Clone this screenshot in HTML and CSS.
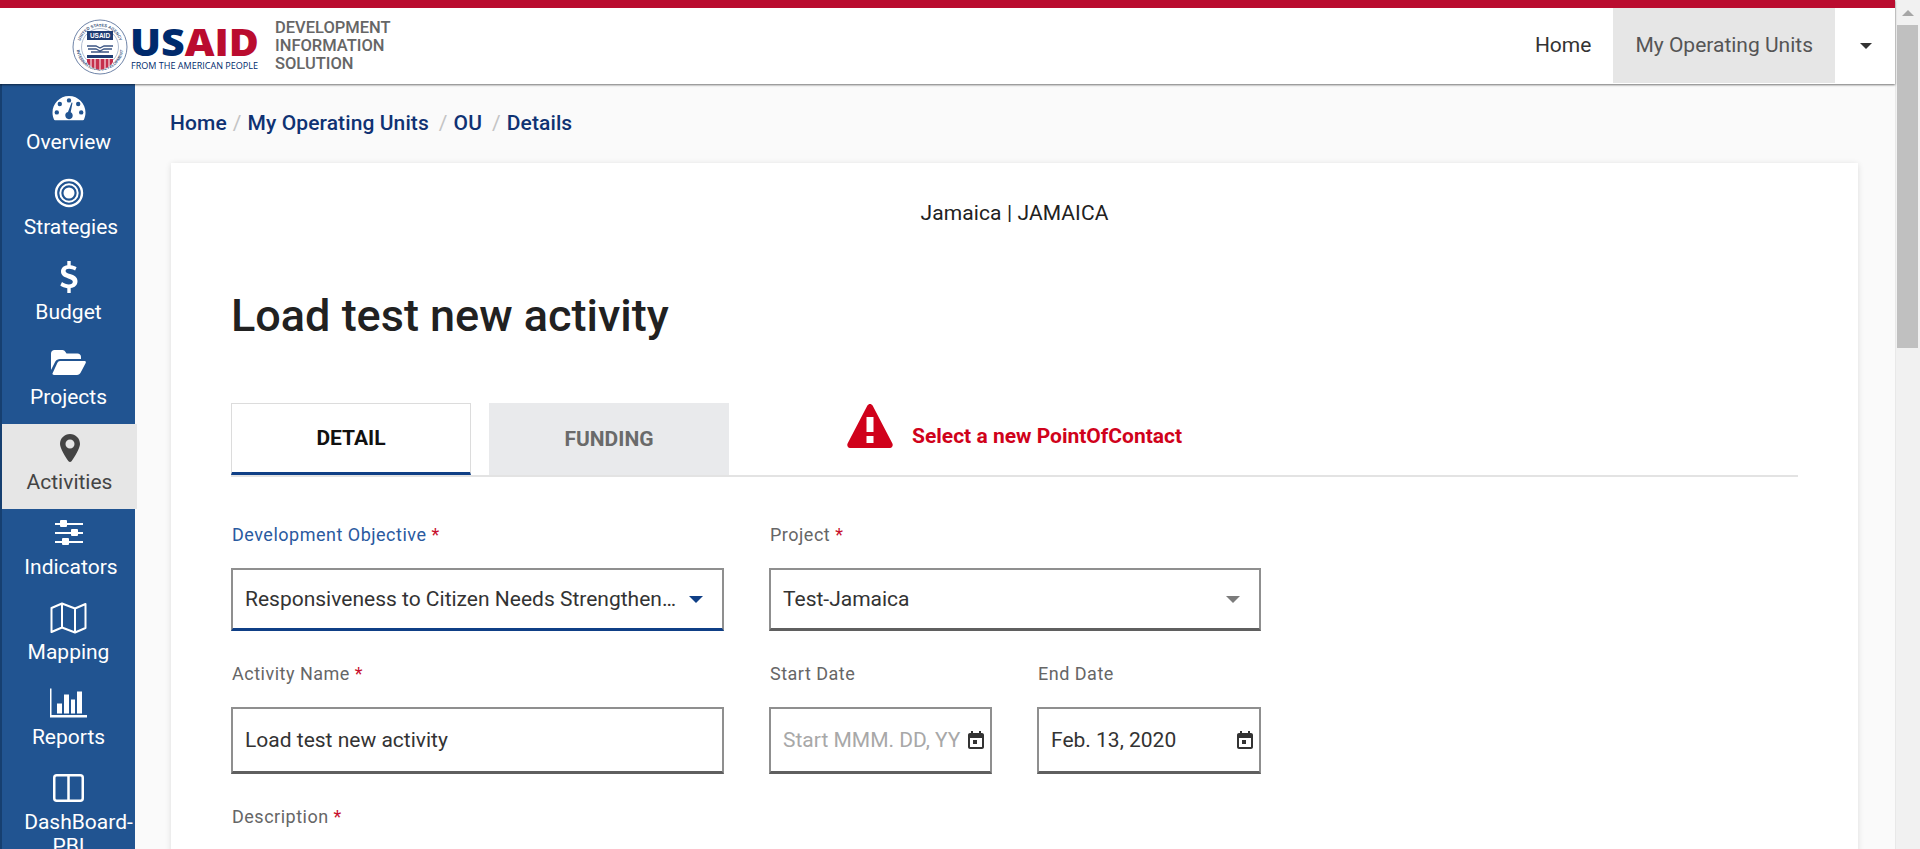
FILE: index.html
```html
<!doctype html>
<html>
<head>
    <title>Load test new activity</title>
    <meta charset="utf-8"/>
    <link rel="stylesheet" href="styles.css">
</head>
<body>
<div class="window">
    <div class="viewport">
        <header class="topbar">
            <div class="brand">
                <svg class="logo" width="190" height="58" viewBox="0 0 190 58">
                    <defs>
                        <path id="sealTop" d="M7.500 28 A20.500 20.500 0 0 1 48.500 28"/>
                        <path id="sealBottom" d="M4.500 28 A23.500 23.500 0 0 0 51.500 28"/>
                    </defs>
                    <circle cx="28" cy="28" r="27" fill="#fff" stroke="#6f84a8" stroke-width="1"/>
                    <circle cx="28" cy="28" r="18.500" fill="none" stroke="#8fa0bd" stroke-width=".7"/>
                    <text class="seal-text"><textPath href="#sealTop" startOffset="50%" text-anchor="middle">UNITED STATES AGENCY</textPath></text>
                    <text class="seal-text"><textPath href="#sealBottom" startOffset="50%" text-anchor="middle">INTERNATIONAL DEVELOPMENT</textPath></text>
                    <rect x="15" y="12" width="26" height="9" fill="#1f3d73"/>
                    <text class="seal-name" x="28" y="19" text-anchor="middle">USAID</text>
                    <path d="M15 27 h9 l4 2 l4 -2 h9 M16 30 h8 l4 2 l4 -2 h8 M19 33 h18" fill="none" stroke="#3c5684" stroke-width="1.300"/>
                    <rect x="15" y="36" width="26" height="3" fill="#1f3d73"/>
                    <path d="M15 40 h26 v3 q-2 5 -13 8 q-11 -3 -13 -8 z" fill="#c5304c"/>
                    <path d="M19 40 v8 M23 40 v10 M28 40 v11 M33 40 v10 M37 40 v8" stroke="#fff" stroke-width="1"/>
                    <text class="logo-name" x="58" y="37" textLength="129" lengthAdjust="spacingAndGlyphs"><tspan class="logo-us">US</tspan><tspan class="logo-aid">AID</tspan></text>
                    <text class="logo-from" x="59" y="50" textLength="127" lengthAdjust="spacingAndGlyphs">FROM THE AMERICAN PEOPLE</text>
                </svg>
                <div class="brand-title">DEVELOPMENT<br>INFORMATION<br>SOLUTION</div>
            </div>
            <nav class="topnav">
                <a class="topnav-link">Home</a>
                <a class="topnav-link topnav-active">My Operating Units</a>
                <span class="topnav-caret"></span>
            </nav>
        </header>

        <div class="content-wrap">
            <aside class="sidebar">
                <a class="side-item">
                    <svg class="side-icon" width="34" height="26" viewBox="0 0 34 26"><path fill="#fff" fill-rule="evenodd" d="M17 1C7.600 1 .5 8.600 .5 17.600c0 2.600.6 5 1.600 7.100.2.3.5.5.9.5h28c.4 0 .7-.2.9-.5 1-2.100 1.600-4.500 1.600-7.100C33.500 8.600 26.400 1 17 1zM17 3.200a2.200 2.200 0 1 1 0 4.400 2.200 2.200 0 0 1 0-4.400zM7.800 6.800a2.200 2.200 0 1 1 0 4.400 2.200 2.200 0 0 1 0-4.400zM26.200 6.800a2.200 2.200 0 1 1 0 4.400 2.200 2.200 0 0 1 0-4.400zM4.800 15.200a2.200 2.200 0 1 1 0 4.400 2.200 2.200 0 0 1 0-4.400zM29.200 15.200a2.200 2.200 0 1 1 0 4.400 2.200 2.200 0 0 1 0-4.400zM19.600 7.500l.9.2-1.800 9.600c1.200.6 2 1.800 2 3.200a3.700 3.700 0 1 1-4.700-3.600z"/></svg>
                    <span>Overview</span>
                </a>
                <a class="side-item side-item-nudge">
                    <svg class="side-icon" width="30" height="30" viewBox="0 0 30 30"><g fill="none" stroke="#fff"><circle cx="15" cy="15" r="13" stroke-width="2.400"/><circle cx="15" cy="15" r="8.700" stroke-width="2"/></g><circle cx="15" cy="15" r="5.500" fill="#fff"/></svg>
                    <span>Strategies</span>
                </a>
                <a class="side-item">
                    <svg class="side-icon" width="18" height="34" viewBox="0 0 18 34"><path fill="#fff" d="M7.300 0h3.400v4.200c2.300.3 4.300 1 5.900 2l-1.500 3.400c-2-1.200-4-1.900-6-1.900-2.200 0-3.500.9-3.500 2.200 0 1.500 1.500 2.100 4.400 3.100 4.300 1.400 7.500 3 7.500 7.200 0 3.700-2.600 6.300-6.800 6.900V32H7.300v-4.800c-2.700-.3-5.200-1.300-7-2.700L2 21c2.100 1.500 4.500 2.400 6.800 2.400 2.500 0 4-1 4-2.700 0-1.600-1.500-2.300-4.600-3.300C4.200 16 1 14.500 1 10.500 1 7 3.500 4.800 7.300 4.200z"/></svg>
                    <span>Budget</span>
                </a>
                <a class="side-item">
                    <svg class="side-icon" width="35" height="26" viewBox="0 0 35 26"><path fill="#fff" d="M0 3.500C0 1.500 1.500 0 3.500 0h8c1.300 0 2.300.8 3 2l1 1.500h11c2 0 3.500 1.500 3.500 3.500v2H9c-2 0-3.700 1-4.800 2.700L0 20z"/><path fill="#fff" d="M9 11h24.500c1.100 0 1.700 1 1.200 2l-5 9.500c-.8 1.500-2 2.500-3.700 2.500H3c-1.300 0-2-.9-1.300-2L6.300 13C6.900 11.800 7.800 11 9 11z"/></svg>
                    <span>Projects</span>
                </a>
                <a class="side-item side-active">
                    <svg class="side-icon" width="20" height="28" viewBox="0 0 20 28"><path fill="#444" fill-rule="evenodd" d="M10 0C4.400 0 0 4.400 0 10c0 4.300 6 13.800 8.500 17.200.8 1 2.200 1 3 0C14 23.800 20 14.300 20 10 20 4.400 15.600 0 10 0zM10 5.500a4.500 4.500 0 1 1 0 9 4.500 4.500 0 0 1 0-9z"/></svg>
                    <span>Activities</span>
                </a>
                <a class="side-item side-item-nudge">
                    <svg class="side-icon" width="30" height="26" viewBox="0 0 30 26"><g fill="#fff"><rect x="1" y="3" width="28" height="2"/><rect x="1" y="12" width="28" height="2"/><rect x="1" y="21" width="28" height="2"/><rect x="6" y="0" width="7" height="7" rx="1"/><rect x="17" y="9" width="7" height="7" rx="1"/><rect x="8" y="18" width="7" height="7" rx="1"/></g></svg>
                    <span>Indicators</span>
                </a>
                <a class="side-item">
                    <svg class="side-icon" width="37" height="33" viewBox="0 0 37 33"><path fill="none" stroke="#fff" stroke-width="2" stroke-linejoin="round" d="M1.500 6.500 12 2l13 5 10.500-4.500v24L25 31l-13-5-10.500 4.500zM12 2v24M25 7v24"/></svg>
                    <span>Mapping</span>
                </a>
                <a class="side-item">
                    <svg class="side-icon" width="37" height="29" viewBox="0 0 37 29"><path fill="#fff" d="M0 0h1.500v26.500H37V29H0z"/><path fill="#fff" d="M7 15h5v10H7zM14 6h5v19h-5zM21 11h4v14h-4zM27 3h5v22h-5z"/></svg>
                    <span>Reports</span>
                </a>
                <a class="side-item side-item-wrap">
                    <svg class="side-icon" width="31" height="28" viewBox="0 0 31 28"><rect x="1.250" y="1.250" width="28.500" height="25.500" rx="2.500" fill="none" stroke="#fff" stroke-width="2.500"/><rect x="14.250" y="2" width="2.500" height="24" fill="#fff"/></svg>
                    <span>DashBoard-<br>PBI</span>
                </a>
            </aside>

            <main class="main">
                <div class="breadcrumb">
                    <a>Home</a><span class="crumb-sep">/</span><a>My Operating Units</a><span class="crumb-sep crumb-sep-wide">/</span><a>OU</a><span class="crumb-sep crumb-sep-wide">/</span><a>Details</a>
                </div>

                <section class="card">
                    <div class="ou-name">Jamaica | JAMAICA</div>
                    <h1 class="activity-title">Load test new activity</h1>

                    <div class="tabs">
                        <a class="tab tab-active">DETAIL</a>
                        <a class="tab tab-off">FUNDING</a>
                        <div class="tab-warning">
                            <svg width="46" height="44" viewBox="0 0 46 44"><path fill="#d0021b" fill-rule="evenodd" d="M23 0c1 0 2 .6 2.600 1.600l19.800 38c.9 1.800-.2 4.400-2.400 4.400H3c-2.200 0-3.300-2.600-2.400-4.400l19.800-38C21 .6 22 0 23 0zM19.500 13v15h7V13zM19.500 32v7h7v-7z"/></svg>
                            <span>Select a new PointOfContact</span>
                        </div>
                    </div>

                    <div class="form-grid">
                        <div class="field">
                            <label class="field-label label-focus">Development Objective <em>*</em></label>
                            <div class="input input-focus">
                                <span class="input-value">Responsiveness to Citizen Needs Strengthened</span>
                                <span class="arrow arrow-blue"></span>
                            </div>
                        </div>
                        <div class="field field-wide">
                            <label class="field-label">Project <em>*</em></label>
                            <div class="input">
                                <span class="input-value">Test-Jamaica</span>
                                <span class="arrow"></span>
                            </div>
                        </div>

                        <div class="field">
                            <label class="field-label">Activity Name <em>*</em></label>
                            <div class="input input-tall">
                                <span class="input-value">Load test new activity</span>
                            </div>
                        </div>
                        <div class="field">
                            <label class="field-label">Start Date</label>
                            <div class="input input-tall input-date">
                                <span class="input-value placeholder">Start MMM. DD, YY</span>
                                <svg class="cal" width="16" height="18" viewBox="0 0 16 18"><path fill="#333" fill-rule="evenodd" d="M3 0h2v2h6V0h2v2h1c1.100 0 2 .9 2 2v12c0 1.100-.9 2-2 2H2c-1.100 0-2-.9-2-2V4c0-1.100.9-2 2-2h1zM2 7v9h12V7zM5 9h4v4H5z"/></svg>
                            </div>
                        </div>
                        <div class="field">
                            <label class="field-label">End Date</label>
                            <div class="input input-tall input-date">
                                <span class="input-value">Feb. 13, 2020</span>
                                <svg class="cal" width="16" height="18" viewBox="0 0 16 18"><path fill="#333" fill-rule="evenodd" d="M3 0h2v2h6V0h2v2h1c1.100 0 2 .9 2 2v12c0 1.100-.9 2-2 2H2c-1.100 0-2-.9-2-2V4c0-1.100.9-2 2-2h1zM2 7v9h12V7zM5 9h4v4H5z"/></svg>
                            </div>
                        </div>

                        <div class="field field-full">
                            <label class="field-label">Description <em>*</em></label>
                        </div>
                    </div>
                </section>
            </main>
        </div>
    </div>

    <div class="scrollbar">
        <span class="scroll-up"></span>
        <div class="scroll-thumb"></div>
    </div>
</div>
</body>
</html>
```

FILE: styles.css
```css
* {
box-sizing: border-box;
}
html, body {
margin: 0;
padding: 0;
height: 849px;
overflow: hidden;
}
body {
font-family: Roboto, "Helvetica Neue", Arial, sans-serif;
color: #212121;
background-color: #fafafa;
}
.window {
display: flex;
height: 849px;
}
.viewport {
flex: 1;
min-width: 0;
display: flex;
flex-direction: column;
}

/* top bar */
.topbar {
flex: none;
height: 84px;
display: flex;
justify-content: space-between;
background-color: #fff;
border-top: 8px solid #ba0c2f;
box-shadow: 0 1px 2px rgba(0,0,0,.55);
position: relative;
z-index: 2;
}
.brand {
display: flex;
align-items: center;
padding-left: 72px;
}
.logo {
flex: none;
margin-top: 3px;
}
.seal-text {
font-family: "Liberation Sans", Arial, sans-serif;
font-size: 4.200px;
font-weight: 700;
fill: #3d5680;
}
.seal-name {
font-family: "Liberation Sans", Arial, sans-serif;
font-size: 6.500px;
font-weight: 700;
fill: #fff;
}
.logo-name {
font-family: "Open Sans", Arial, sans-serif;
font-size: 37px;
font-weight: 800;
}
.logo-us {
fill: #002a6c;
}
.logo-aid {
fill: #ba0c2f;
}
.logo-from {
font-family: "Open Sans", Arial, sans-serif;
font-size: 9px;
font-weight: 400;
fill: #002a6c;
}
.brand-title {
margin-left: 13px;
font-size: 16.500px;
line-height: 18px;
font-weight: 500;
color: #666;
}
.topnav {
display: flex;
align-items: stretch;
}
.topnav-link {
display: flex;
align-items: center;
padding: 0 22px 1px 22px;
font-size: 21px;
color: #333;
height: 75px;
}
.topnav-active {
background-color: #e6e6e6;
color: #555;
}
.topnav-caret {
width: 60px;
position: relative;
}
.topnav-caret:after {
content: "";
position: absolute;
left: 25px;
top: 35px;
border: 6px solid transparent;
border-top: 6px solid #333;
border-bottom: 0;
}

/* side navigation */
.content-wrap {
flex: 1;
min-height: 0;
display: flex;
overflow: hidden;
}
.sidebar {
flex: none;
width: 135px;
background-color: #215491;
border-left: 2px solid #163f70;
}
.side-item {
display: flex;
flex-direction: column;
align-items: center;
height: 85px;
padding-top: 7px;
font-size: 21px;
line-height: 24px;
color: #fff;
text-align: center;
}
.side-icon {
height: 34px;
flex: none;
margin-bottom: 5px;
}
.side-active {
margin-right: -2px;
background-color: #e6e6e6;
color: #444;
}
.side-item-nudge span {
text-indent: 5px;
}
.side-item-wrap span {
text-indent: 20px;
}

/* content */
.main {
flex: 1;
min-width: 0;
padding: 0 37px 0 36px;
}
.breadcrumb {
height: 77px;
margin: 0 0 2px -1px;
display: flex;
align-items: center;
font-size: 21px;
font-weight: 500;
letter-spacing: .1px;
color: #0f3273;
}
.crumb-sep {
font-weight: 400;
color: #c4c4c4;
margin: 0 6px;
}
.crumb-sep-wide {
margin-left: 10px;
}
.card {
height: 700px;
padding: 34px 60px 0 60px;
background-color: #fff;
box-shadow: 0 1px 6px rgba(0,0,0,.12);
}
.ou-name {
text-align: center;
font-size: 21px;
letter-spacing: .1px;
line-height: 32px;
color: #212121;
}
.activity-title {
margin: 57px 0 0 0;
font-size: 45px;
line-height: 60px;
font-weight: 500;
color: #212121;
}

/* tabs */
.tabs {
margin-top: 57px;
height: 74px;
display: flex;
border-bottom: 2px solid #e3e3e3;
}
.tab {
width: 240px;
height: 72px;
display: flex;
align-items: center;
justify-content: center;
font-size: 21px;
font-weight: 700;
}
.tab-active {
border: 1px solid #dcdcdc;
border-bottom: 3px solid #0f3f86;
color: #111;
}
.tab-off {
margin-left: 18px;
background-color: #e9eaec;
color: #6a6a6a;
}
.tab-warning {
margin-left: 118px;
display: flex;
align-items: flex-start;
padding-top: 1px;
height: 72px;
color: #d0021b;
font-size: 21px;
line-height: 24px;
font-weight: 700;
gap: 19px;
}
.tab-warning span {
margin-top: 20px;
}

/* form */
.form-grid {
display: grid;
grid-template-columns: 493px 223px 224px;
column-gap: 45px;
margin-top: 45px;
}
.field {
min-width: 0;
margin-bottom: 30px;
}
.field-wide {
grid-column: span 2;
}
.field-full {
grid-column: 1 / -1;
}
.field-label {
display: block;
padding-left: 1px;
height: 26px;
font-size: 18px;
line-height: 26px;
color: #666;
letter-spacing: .5px;
}
.field-label em {
font-style: normal;
color: #c8102e;
}
.label-focus {
color: #2a5a9f;
}
.input {
margin-top: 20px;
height: 63px;
display: flex;
align-items: center;
padding: 0 14px 0 12px;
border: 2px solid #8f8f8f;
border-bottom: 3px solid #5f5f5f;
font-size: 21px;
color: #333;
}
.input-tall {
height: 67px;
}
.input-focus {
border-bottom-color: #0f3f86;
}
.input-value {
flex: 1;
min-width: 0;
white-space: nowrap;
overflow: hidden;
text-overflow: ellipsis;
}
.placeholder {
color: #a8a8a8;
text-overflow: clip;
}
.input-date {
padding-right: 6px;
}
.cal {
flex: none;
margin-left: 6px;
}
.arrow {
flex: none;
margin-left: 10px;
margin-right: 5px;
border: 7px solid transparent;
border-top: 7px solid #7b7b7b;
border-bottom: 0;
}
.arrow-blue {
border-top-color: #0f3f86;
}

/* scrollbar */
.scrollbar {
flex: none;
width: 25px;
background-color: #f1f1f1;
border-left: 1px solid #e8e8e8;
position: relative;
}
.scroll-up {
position: absolute;
left: 6px;
top: 10px;
border: 6px solid transparent;
border-bottom: 6px solid #a6a6a6;
border-top: 0;
}
.scroll-thumb {
position: absolute;
left: 1px;
top: 25px;
width: 21px;
height: 323px;
background-color: #c0c0c0;
}
```
